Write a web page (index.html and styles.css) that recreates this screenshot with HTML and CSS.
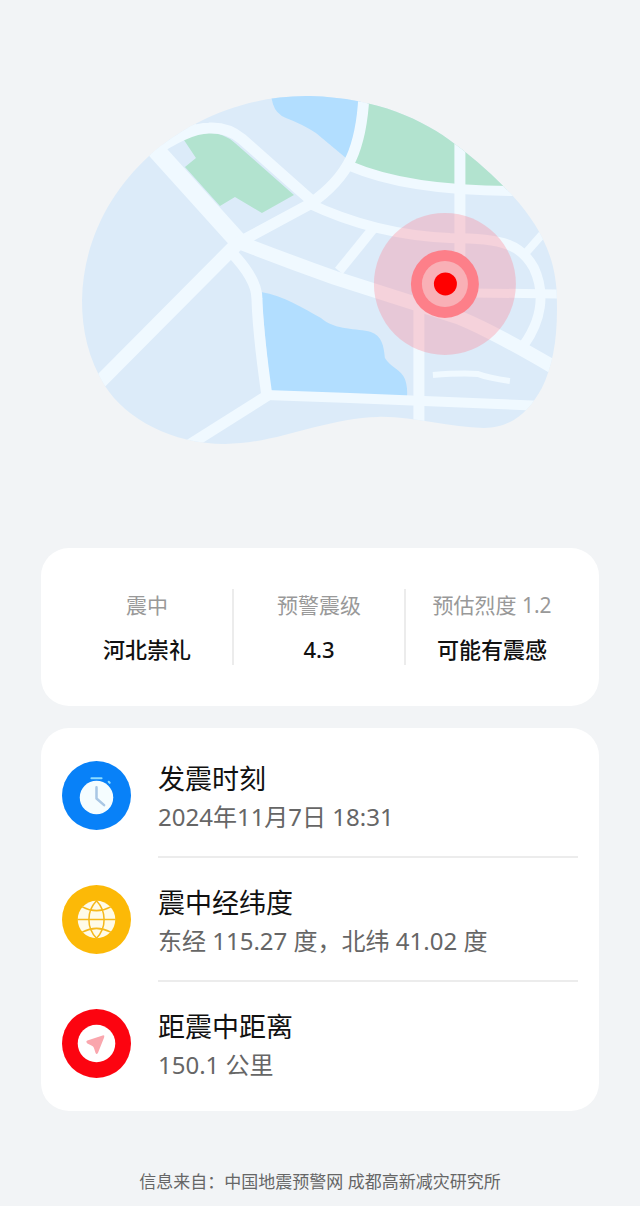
FILE: index.html
```html
<!DOCTYPE html>
<html lang="zh-CN">
<head>
<meta charset="utf-8">
<meta name="viewport" content="width=device-width, initial-scale=1">
<title>地震预警</title>
<link rel="stylesheet" href="styles.css">
</head>
<body>
<main class="page">
  <svg class="map" viewBox="80 92 480 356" role="img" aria-label="震中地图">
    <defs>
      <clipPath id="land">
        <path d="M310 96C378 98 424 120 455 144C478 161 497 179 513 196C543 229 557 262 557 300C558 338 553 366 542 388C530 410 513 428 484 428C450 428 412 416 378 417C325 418 276 444 225 444C172 444 126 419 105 386C88 358 82 330 82 300C83 240 112 190 148 157C190 119 248 95 310 96Z"/>
      </clipPath>
    </defs>
    <g clip-path="url(#land)">
      <rect class="ground" x="80" y="92" width="480" height="356"/>
      <path class="water" d="M270 92L273 104Q276 114 286 118Q302 124 316 133L346 158L362 130V92Z"/>
      <path class="water" d="M261 292C284 296 303 308 321 318C336 331 357 328 371 332C382 336 384 346 385 358C390 367 402 370 405 379Q408 387 407 398H271Z"/>
      <path class="park" d="M184 140Q195 133 209 133Q224 133 235 143L294 195L262 213L235 197L220 206L185 167L196 158Z"/>
      <path class="park" d="M368 92H510V190Q460 187 430 184Q385 176 352 163Q364 137 368 92Z"/>
      <g class="road">
        <path stroke-width="18" d="M146 139L238 241"/>
        <path stroke-width="14" d="M240 241L96 386"/>
        <path stroke-width="11" d="M150 154Q188 128 209 128Q228 127 242 139L313 202"/>
        <path stroke-width="10" d="M140 150Q165 128 195 121"/>
        <path stroke-width="11" d="M236 244L310 204Q339 184 351 159Q362 135 364 96"/>
        <path stroke-width="10" d="M308 203Q375 235 450 238C506 238 522 246 534 268C546 294 541 321 524 345"/>
        <path stroke-width="10" d="M350 166Q408 191 515 191"/>
        <path stroke-width="11" d="M460 135V260"/>
        <path stroke-width="14" d="M236 241Q285 260 335 278L460 318Q492 331 555 368"/>
        <path stroke-width="10" d="M373 229L339 271"/>
        <path stroke-width="11" d="M231 252Q257 279 257 299Q258 333 267 396"/>
        <path stroke-width="11" d="M270 394L186 447"/>
        <path stroke-width="10" d="M266 395L350 398L545 406"/>
        <path stroke-width="11" d="M419 306V430"/>
        <path stroke-width="9" d="M470 293L560 294"/>
        <path stroke-width="8" d="M548 228L526 253"/>
        <path stroke-width="6" d="M433 375Q460 373 478 374Q488 378 510 381"/>
      </g>
    </g>
    <circle class="pulse" cx="445" cy="284" r="71"/>
    <circle class="ring" cx="445" cy="284" r="34"/>
    <circle class="halo" cx="445" cy="284" r="23"/>
    <circle class="dot" cx="445.5" cy="284" r="11.5"/>
  </svg>

  <dl class="card summary">
    <div class="stat"><dt>震中</dt><dd>河北崇礼</dd></div>
    <div class="stat"><dt>预警震级</dt><dd>4.3</dd></div>
    <div class="stat"><dt>预估烈度 1.2</dt><dd>可能有震感</dd></div>
  </dl>

  <ul class="card details">
    <li class="row">
      <svg class="icon" viewBox="0 0 68 68" aria-hidden="true">
        <circle cx="34" cy="34" r="34" fill="#0881f8"/>
        <path d="M29 17H39M46 20.5L47 21.5" fill="none" stroke="#8ddcff" stroke-width="2" stroke-linecap="round"/>
        <circle cx="34" cy="36" r="16.5" fill="#f5fdff"/>
        <path d="M34 26V37L41.5 43.5" fill="none" stroke="#a9c7e4" stroke-width="2.5" stroke-linecap="round" stroke-linejoin="round"/>
      </svg>
      <div class="text"><h2>发震时刻</h2><p>2024年11月7日 18:31</p></div>
    </li>
    <li class="row">
      <svg class="icon" viewBox="0 0 68 68" aria-hidden="true">
        <circle cx="34" cy="34" r="34" fill="#fcb907"/>
        <circle cx="34" cy="34" r="18.5" fill="#fffbe8"/>
        <path d="M34 15.5C24 26 24 42 34 52.5C44 42 44 26 34 15.5ZM15 34H53M20 21.5Q34 29 48 21.5M20 46.5Q34 39 48 46.5" fill="none" stroke="#f5b91c" stroke-width="1.5"/>
      </svg>
      <div class="text"><h2>震中经纬度</h2><p>东经 115.27 度，北纬 41.02 度</p></div>
    </li>
    <li class="row">
      <svg class="icon" viewBox="0 0 68 68" aria-hidden="true">
        <circle cx="34" cy="34" r="34" fill="#fc0410"/>
        <circle cx="34" cy="34" r="18.5" fill="#fff"/>
        <path d="M25 31L40 26Q42.500 25.500 41.500 28L35.500 43Q34 45.500 33 43L31.500 38.500Q31 36.500 29 36L25 34Q23 32 25 31Z" fill="#faa6ad"/>
      </svg>
      <div class="text"><h2>距震中距离</h2><p>150.1 公里</p></div>
    </li>
  </ul>

  <footer class="source">信息来自：中国地震预警网 成都高新减灾研究所</footer>
</main>
</body>
</html>
```
FILE: styles.css
```css
* { box-sizing: border-box; }

body {
  margin: 0;
  background: #f2f4f6;
  color: #111;
  font-family: "Noto Sans", "Noto Sans CJK SC", sans-serif;
}

.page {
  display: flex;
  flex-direction: column;
  padding: 92px 41px 8px;
}

.map {
  display: block;
  width: 86%;
  margin: 0 auto 100px;
}

.ground { fill: #dcebf9; }
.water { fill: #b2deff; }
.park { fill: #b2e3cf; }
.road { fill: none; stroke: #f0f9ff; }
.pulse { fill: #ff8090; fill-opacity: 0.32; }
.ring { fill: #fd7f89; }
.halo { fill: #f9b0b6; }
.dot { fill: #ff0000; }

.card {
  margin: 0 0 22px;
  border-radius: 28px;
  background: #fff;
}

.summary {
  display: grid;
  grid-template-columns: repeat(3, 1fr);
  padding: 41px 21px;
}

.stat {
  display: flex;
  flex-direction: column;
  gap: 12px;
  text-align: center;
  line-height: 32px;
}

.stat:not(:last-child) { border-right: 2px solid #ececec; }

.stat dt {
  color: #999;
  font-size: 21px;
}

.stat dd {
  margin: 0;
  font-size: 22px;
  font-weight: 500;
}

.details {
  padding: 6px 21px 5px;
  list-style: none;
}

.row {
  display: flex;
  align-items: center;
  gap: 27px;
}

.icon {
  flex: none;
  width: 69px;
  height: 69px;
}

.text {
  flex: 1;
  height: 124px;
  padding-top: 26px;
  border-bottom: 2px solid #ececec;
}

.row:last-child .text { border-bottom: 0; }

.text h2 {
  margin: 0;
  font-size: 27px;
  font-weight: 400;
  line-height: 38px;
}

.text p {
  margin: 0;
  color: #666;
  font-size: 24px;
  line-height: 38px;
}

.source {
  margin-top: 34px;
  color: #666;
  font-size: 17px;
  line-height: 30px;
  text-align: center;
}
```
